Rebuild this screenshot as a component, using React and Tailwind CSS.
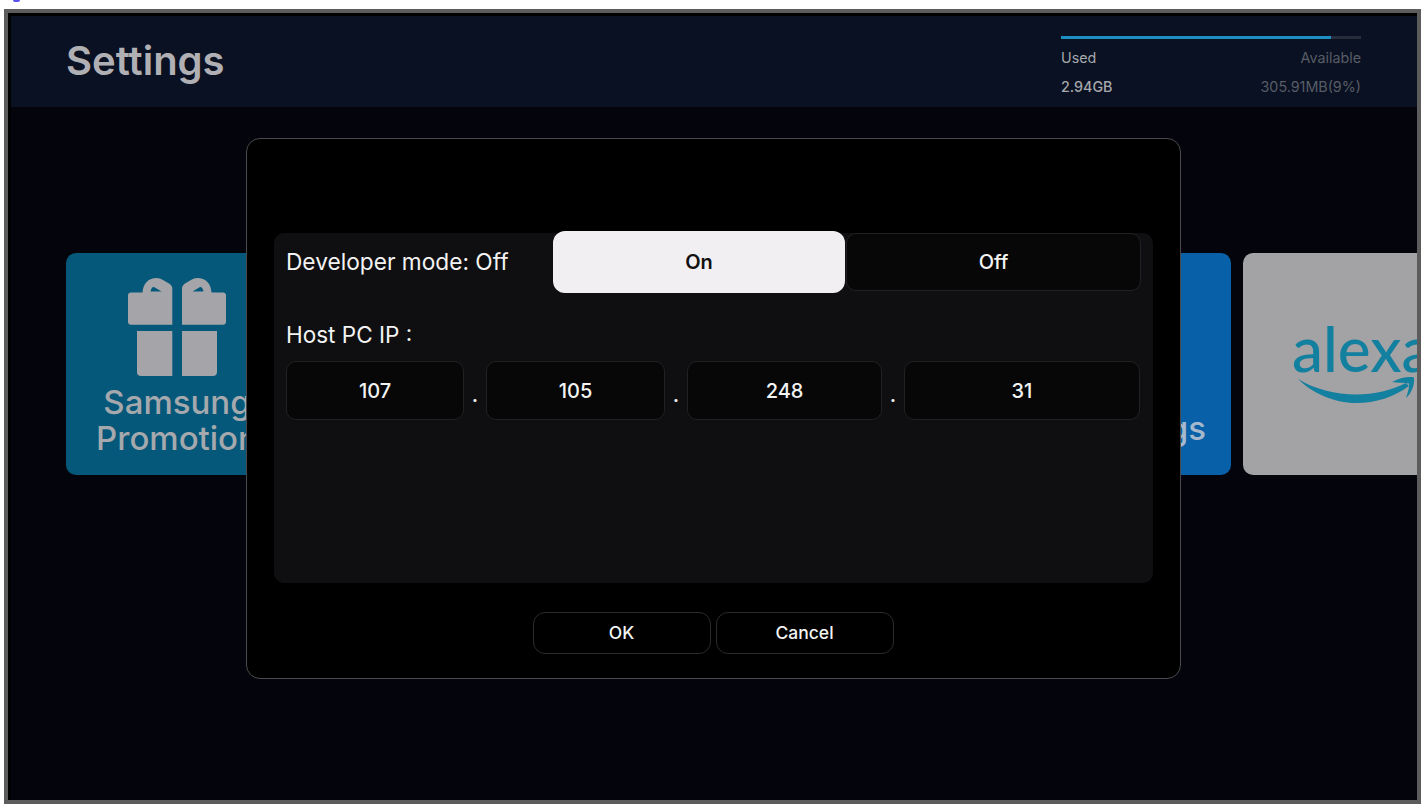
const F = "font-['Inter',sans-serif]";

function Gift() {
  return (
    <svg width="99" height="99" viewBox="0 0 99 99" className="block">
      <path fill="#a5a5a9" fillRule="evenodd" d="M3 14.5H14.5C15 5 21 0 28.5 0C31 0 33 .8 35 2L41 5.5C43.5 7 44.3 8.5 44.3 11V46.7H3C1.2 46.7 0 45.5 0 43.7V17.5C0 15.7 1.2 14.5 3 14.5ZM22.5 13.5H33.5L26 9C24.5 8.6 23 10.5 22.5 13.5Z" />
      <path fill="#a5a5a9" fillRule="evenodd" d="M95 14.5H83.5C83 5 77 0 69.5 0C67 0 65 .8 63 2L57 5.5C54.8 7 54 8.5 54 11V46.7H95C96.8 46.7 98 45.5 98 43.7V17.5C98 15.7 96.8 14.5 95 14.5ZM75.5 13.5H64.5L72 9C73.5 8.6 75 10.5 75.5 13.5Z" />
      <path fill="#a5a5a9" d="M9 53H44.3V98H13C10.5 98 9 96.5 9 94Z" />
      <path fill="#a5a5a9" d="M54 53H89V94C89 96.5 87.5 98 85 98H54Z" />
    </svg>
  );
}

function Smile() {
  return (
    <svg width="125" height="36" viewBox="0 0 125 36" className="block">
      <path fill="#13809f" d="M0 3C16 13 38 18.5 58 18.5C76 18.5 94 14 108 7L111 10C96 21 78 27 58 27C36 27 14 17 0 3Z" />
      <path fill="#13809f" d="M94 6C101 2 111 0 116 1.5C117 9 113 18 108 22C110 16 111.5 11 111 7.5C106 6.8 100 6.8 94 6Z" />
    </svg>
  );
}

function Box({ w, children }) {
  return (
    <div className={`${w} h-[59px] shrink-0 flex items-center justify-center rounded-[10px] border border-[#212123] bg-[#070708] text-[20px] font-medium text-[#f3f3f3]`}>
      {children}
    </div>
  );
}

function Dot() {
  return <span className="w-[22px] shrink-0 pt-[9px] text-center text-[20px] font-semibold leading-none text-[#e8e8e8]">.</span>;
}

function ActionButton({ children }) {
  return (
    <div className="w-[178px] h-[42px] flex items-center justify-center rounded-[12px] border border-[#2b2b2d] text-[17.5px] font-medium text-[#f3f3f3]">
      {children}
    </div>
  );
}

export default function App() {
  return (
    <div className={`${F} relative h-[811px] w-[1426px] overflow-hidden bg-white`}>
      <div className="absolute left-[13px] top-0 h-[2px] w-[7px] rounded-b-full bg-[#5a50f0]" />
      <div className="absolute left-[4px] top-[9px] h-[795px] w-[1417px] overflow-hidden border-[4px] border-[#5c5c5c] bg-black">
        <div className="relative h-full w-full border-l-[3px] border-t-[3px] border-black bg-[#04050c]">
          <header className="flex h-[91px] items-start justify-between bg-[#0a1122] pl-[55px] pr-[56px]">
            <h1 className="mt-[22px] text-[40px] font-semibold leading-[46px] text-[#b0b0b4]">Settings</h1>
            <div className="mt-[20px] w-[300px]">
              <div className="h-[3px] w-full bg-[#262c3a]">
                <div className="h-full w-[270px] bg-[#1d8fc3]" />
              </div>
              <div className="mt-[9px] flex justify-between text-[14.3px] leading-[20px]">
                <span className="text-[#a6a8ac]">Used</span>
                <span className="text-[#585c66]">Available</span>
              </div>
              <div className="mt-[9px] flex justify-between text-[14.3px] leading-[20px]">
                <span className="font-medium text-[#a6a8ac]">2.94GB</span>
                <span className="text-[#585c66]">305.91MB(9%)</span>
              </div>
            </div>
          </header>

          <div className="mt-[146px] flex pl-[55px]">
            <div className="flex h-[222px] w-[222px] shrink-0 flex-col items-center overflow-hidden rounded-[10px] bg-[#05587a] pt-[25px]">
              <Gift />
              <div className="mt-[7px] whitespace-nowrap text-center text-[33px] font-medium leading-[36px] text-[#a5a8ac]">
                Samsung<br />Promotion
              </div>
            </div>
            <div className="ml-[721px] flex h-[222px] w-[222px] shrink-0 items-end justify-end rounded-[10px] bg-[#0860a8] pb-[29px] pr-[25px]">
              <span className="text-[33px] font-medium leading-[36px] text-[#a5b8cc]">Settings</span>
            </div>
            <div className="relative ml-[12px] h-[222px] w-[222px] shrink-0 overflow-hidden rounded-[10px] bg-[#a3a2a5]">
              <div className="absolute left-[49px] top-[58px] font-['Lato',sans-serif] text-[62px] font-medium leading-[74px] text-[#13809f]">alexa</div>
              <div className="absolute left-[55px] top-[123px]"><Smile /></div>
            </div>
          </div>

          <div className="absolute left-[235px] top-[122px] flex h-[541px] w-[935px] flex-col rounded-[14px] border border-[#4a4a4c] bg-black">
            <div className="ml-[27px] mt-[94px] h-[350px] w-[879px] rounded-[10px] bg-[#0f0f11] pl-[12px] pr-[12px]">
              <div className="flex h-[58px] items-center">
                <span className="w-[267px] shrink-0 text-[22.7px] leading-[28px] text-[#f3f3f3]">Developer mode: Off</span>
                <div className="relative z-10 -my-[2px] flex h-[62px] w-[292px] shrink-0 items-center justify-center rounded-[12px] bg-[#f1eff1] text-[20px] font-semibold text-[#111111]">On</div>
                <div className="ml-[1px] flex h-[58px] w-[295px] shrink-0 items-center justify-center rounded-[10px] border border-[#212123] bg-[#070708] text-[20px] font-medium text-[#f3f3f3]">Off</div>
              </div>
              <div className="mt-[30px] text-[22.5px] leading-[28px] text-[#f3f3f3]">Host PC IP :</div>
              <div className="mt-[12px] flex items-center">
                <Box w="w-[178px]">107</Box>
                <Dot />
                <Box w="w-[179px]">105</Box>
                <Dot />
                <Box w="w-[195px]">248</Box>
                <Dot />
                <Box w="w-[236px]">31</Box>
              </div>
            </div>
            <div className="mt-[29px] flex justify-center gap-[5px] pr-[1px]">
              <ActionButton>OK</ActionButton>
              <ActionButton>Cancel</ActionButton>
            </div>
          </div>
        </div>
      </div>
    </div>
  );
}
